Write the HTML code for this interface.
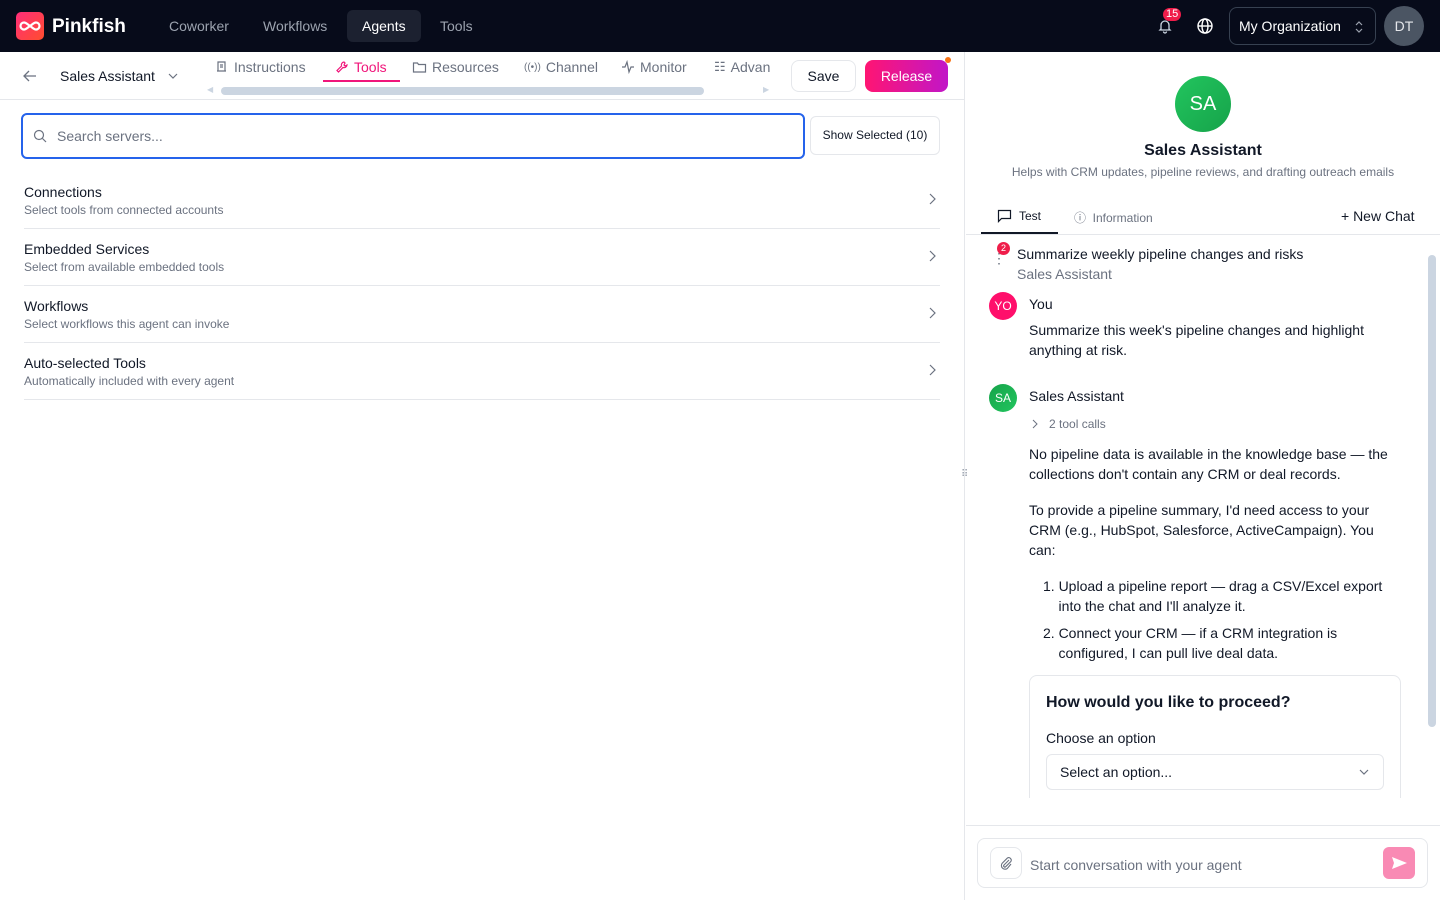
<!DOCTYPE html>
<html><head><meta charset="utf-8"><style>
*{box-sizing:border-box;margin:0;padding:0}
body{width:1440px;height:900px;overflow:hidden;font-family:"Liberation Sans",sans-serif;background:#fff;color:#111827;position:relative}
.top{position:absolute;left:0;top:0;width:1440px;height:52px;background:#070b1a}
.abs{position:absolute}
.nav{position:absolute;top:10px;height:32px;line-height:32px;font-size:14px;color:#9ca3af;padding:0 15px;border-radius:6px}
.row{position:absolute;left:24px;width:916px;height:57px;border-bottom:1px solid #e5e7eb}
.row .t{position:absolute;top:12px;font-size:14px;color:#111827}
.row .s{position:absolute;top:31px;font-size:12px;color:#6b7280}
.row .c{position:absolute;right:4px;top:21px}
.tab{position:absolute;top:59px;font-size:14px;color:#6b7280;display:flex;align-items:center;gap:5px}
.p{position:absolute;left:1029px;font-size:14px;line-height:20px;color:#111827}
</style></head><body>
<div class="top"></div>
<div class="abs" style="left:16px;top:12px;width:28px;height:28px;border-radius:5px;background:linear-gradient(135deg,#ff2d7a,#ff4d2d)"><svg width="28" height="28" viewBox="0 0 28 28"><path d="M8 10.5a3.5 3.5 0 1 0 0 7c2 0 3-1.5 6-3.5s4-3.5 6-3.5a3.5 3.5 0 1 1 0 7c-2 0-3-1.5-6-3.5s-4-3.5-6-3.5z" fill="none" stroke="#fff" stroke-width="2.2"/></svg></div>
<div class="abs" style="left:52px;top:16px;font-size:19px;font-weight:bold;color:#fff">Pinkfish</div>
<div class="nav" style="left:154px">Coworker</div>
<div class="nav" style="left:248px">Workflows</div>
<div class="nav" style="left:347px;background:#1c2130;color:#fff">Agents</div>
<div class="nav" style="left:425px">Tools</div>
<svg class="abs" style="left:1157px;top:18px" width="16" height="16" viewBox="0 0 16 16" fill="none" stroke="#cbd5e1" stroke-width="1.3"><path d="M4 11V7a4 4 0 0 1 8 0v4l1 1H3zM6.5 13.5a1.5 1.5 0 0 0 3 0"/></svg>
<div class="abs" style="left:1163px;top:8px;background:#ef1d4a;color:#fff;font-size:11px;line-height:13px;padding:0 3px;border-radius:7px">15</div>
<svg class="abs" style="left:1196px;top:17px" width="18" height="18" viewBox="0 0 18 18" fill="none" stroke="#fff" stroke-width="1.4"><circle cx="9" cy="9" r="7"/><ellipse cx="9" cy="9" rx="3" ry="7"/><path d="M2 9h14"/></svg>
<div class="abs" style="left:1229px;top:7px;width:147px;height:38px;border:1px solid #374151;border-radius:8px;color:#fff;font-size:14px;line-height:36px;padding-left:9px">My Organization <svg style="position:absolute;right:12px;top:13px" width="8" height="12" viewBox="0 0 8 12" fill="none" stroke="#9ca3af" stroke-width="1.2"><path d="M1 4l3-3 3 3M1 8l3 3 3-3"/></svg></div>
<div class="abs" style="left:1384px;top:6px;width:40px;height:40px;border-radius:50%;background:#4b5563;color:#e5e7eb;font-size:14px;text-align:center;line-height:40px">DT</div>

<div class="abs" style="left:0;top:52px;width:964px;height:48px;border-bottom:1px solid #e5e7eb"></div>
<svg class="abs" style="left:22px;top:68px" width="16" height="16" viewBox="0 0 16 16" fill="none" stroke="#6b7280" stroke-width="1.3"><path d="M14 8H2M7 3L2 8l5 5"/></svg>
<div class="abs" style="left:60px;top:68px;font-size:14px">Sales Assistant</div>
<svg class="abs" style="left:168px;top:72px" width="10" height="8" viewBox="0 0 10 8" fill="none" stroke="#6b7280" stroke-width="1.2"><path d="M1 2l4 4 4-4"/></svg>
<div class="tab" style="left:215px"><svg width="14" height="14" viewBox="0 0 14 14" fill="none" stroke="#6b7280" stroke-width="1.2"><path d="M3 2h7v9H3zM5 5h3M5 7h3M2 11h9"/></svg>Instructions</div>
<div class="tab" style="left:335px;color:#f0157a"><svg width="14" height="14" viewBox="0 0 14 14" fill="none" stroke="#f0157a" stroke-width="1.2"><path d="M9 2a3 3 0 0 0-2.5 4L2 10.5 3.5 12 8 7.5A3 3 0 0 0 12 5l-2 1-1-1 1-2z"/></svg>Tools</div>
<div class="abs" style="left:323px;top:80px;width:77px;height:2px;background:#f0157a"></div>
<div class="tab" style="left:412px"><svg width="15" height="14" viewBox="0 0 15 14" fill="none" stroke="#6b7280" stroke-width="1.2"><path d="M1.5 3h4l1 1.5h7V12h-12z"/></svg>Resources</div>
<div class="tab" style="left:524px"><span style="font-size:10px">((•))</span>Channel</div>
<div class="tab" style="left:621px"><svg width="14" height="14" viewBox="0 0 14 14" fill="none" stroke="#6b7280" stroke-width="1.2"><path d="M1 7h3l2-5 2 10 2-5h3"/></svg>Monitor</div>
<div class="tab" style="left:714px"><span style="font-size:13px">☷</span>Advan</div>
<div class="abs" style="left:221px;top:87px;width:483px;height:8px;border-radius:4px;background:#cbd5e1"></div>
<div class="abs" style="left:207px;top:85px;font-size:8px;color:#cbd5e1">◀</div>
<div class="abs" style="left:763px;top:85px;font-size:8px;color:#cbd5e1">▶</div>
<div class="abs" style="left:791px;top:60px;width:65px;height:32px;border:1px solid #e5e7eb;border-radius:8px;font-size:14px;text-align:center;line-height:30px">Save</div>
<div class="abs" style="left:865px;top:60px;width:83px;height:32px;border-radius:8px;background:linear-gradient(90deg,#ff1572,#c116c8);color:#fff;font-size:14px;text-align:center;line-height:32px">Release</div>
<div class="abs" style="left:945px;top:57px;width:6px;height:6px;border-radius:50%;background:#f97316"></div>

<div class="abs" style="left:21px;top:113px;width:784px;height:46px;border:2px solid #2563eb;border-radius:6px"></div>
<svg class="abs" style="left:33px;top:129px" width="14" height="14" viewBox="0 0 14 14" fill="none" stroke="#6b7280" stroke-width="1.2"><circle cx="6" cy="6" r="4.5"/><path d="M9.5 9.5L13 13"/></svg>
<div class="abs" style="left:57px;top:128px;font-size:14px;color:#6b7280">Search servers...</div>
<div class="abs" style="left:810px;top:116px;width:130px;height:39px;border:1px solid #e5e7eb;border-radius:6px;font-size:12px;text-align:center;line-height:37px">Show Selected (10)</div>

<div class="row" style="top:172px"><div class="t">Connections</div><div class="s">Select tools from connected accounts</div><svg class="c" width="8" height="12" viewBox="0 0 8 12" fill="none" stroke="#6b7280" stroke-width="1.2"><path d="M2 1l5 5-5 5"/></svg></div>
<div class="row" style="top:229px"><div class="t">Embedded Services</div><div class="s">Select from available embedded tools</div><svg class="c" width="8" height="12" viewBox="0 0 8 12" fill="none" stroke="#6b7280" stroke-width="1.2"><path d="M2 1l5 5-5 5"/></svg></div>
<div class="row" style="top:286px"><div class="t">Workflows</div><div class="s">Select workflows this agent can invoke</div><svg class="c" width="8" height="12" viewBox="0 0 8 12" fill="none" stroke="#6b7280" stroke-width="1.2"><path d="M2 1l5 5-5 5"/></svg></div>
<div class="row" style="top:343px"><div class="t">Auto-selected Tools</div><div class="s">Automatically included with every agent</div><svg class="c" width="8" height="12" viewBox="0 0 8 12" fill="none" stroke="#6b7280" stroke-width="1.2"><path d="M2 1l5 5-5 5"/></svg></div>

<div class="abs" style="left:964px;top:52px;width:1px;height:848px;background:#e5e7eb"></div>
<div class="abs" style="left:961px;top:469px;font-size:10px;color:#9ca3af">⠿</div>

<div class="abs" style="left:1175px;top:76px;width:56px;height:56px;border-radius:50%;background:linear-gradient(135deg,#22c55e,#16a34a);color:#fff;font-size:20px;text-align:center;line-height:56px">SA</div>
<div class="abs" style="left:966px;width:474px;top:142px;text-align:center;font-size:16px;font-weight:bold">Sales Assistant</div>
<div class="abs" style="left:966px;width:474px;top:165px;text-align:center;font-size:12px;color:#6b7280">Helps with CRM updates, pipeline reviews, and drafting outreach emails</div>
<div class="abs" style="left:966px;top:234px;width:474px;height:1px;background:#e5e7eb"></div>
<div class="abs" style="left:981px;top:232px;width:77px;height:2px;background:#111827"></div>
<svg class="abs" style="left:997px;top:209px" width="15" height="14" viewBox="0 0 15 14" fill="none" stroke="#111827" stroke-width="1.2"><path d="M1.5 1.5h12v8h-9l-3 3z"/></svg>
<div class="abs" style="left:1019px;top:209px;font-size:12px">Test</div>
<div class="abs" style="left:1074px;top:209px;font-size:12px;color:#6b7280">ⓘ&nbsp; Information</div>
<div class="abs" style="left:1341px;top:208px;font-size:14px">+ New Chat</div>
<div class="abs" style="left:1428px;top:255px;width:8px;height:472px;border-radius:4px;background:#cbd5e1"></div>
<div class="abs" style="left:992px;top:250px;color:#6b7280;font-size:14px">⋮</div>
<div class="abs" style="left:997px;top:242px;width:13px;height:13px;border-radius:50%;background:#ef1d4a;color:#fff;font-size:9px;text-align:center;line-height:13px">2</div>
<div class="p" style="left:1017px;top:244px">Summarize weekly pipeline changes and risks</div>
<div class="p" style="left:1017px;top:264px;color:#6b7280">Sales Assistant</div>
<div class="abs" style="left:989px;top:292px;width:28px;height:28px;border-radius:50%;background:#ff0f6b;color:#fff;font-size:12px;text-align:center;line-height:28px">YO</div>
<div class="p" style="top:294px">You</div>
<div class="p" style="top:320px;width:370px">Summarize this week's pipeline changes and highlight anything at risk.</div>
<div class="abs" style="left:989px;top:384px;width:28px;height:28px;border-radius:50%;background:linear-gradient(135deg,#16a34a,#22c55e);color:#fff;font-size:12px;text-align:center;line-height:28px">SA</div>
<div class="p" style="top:386px">Sales Assistant</div>
<svg class="abs" style="left:1032px;top:419px" width="6" height="10" viewBox="0 0 6 10" fill="none" stroke="#6b7280" stroke-width="1"><path d="M1 1l4 4-4 4"/></svg>
<div class="p" style="left:1049px;top:414px;font-size:12px;color:#6b7280">2 tool calls</div>
<div class="p" style="top:444px;width:372px">No pipeline data is available in the knowledge base — the collections don't contain any CRM or deal records.</div>
<div class="p" style="top:500px;width:372px">To provide a pipeline summary, I'd need access to your CRM (e.g., HubSpot, Salesforce, ActiveCampaign). You can:</div>
<div class="p" style="left:1043px;top:576px;width:350px">1. Upload a pipeline report — drag a CSV/Excel export<br>&nbsp;&nbsp;&nbsp;&nbsp;into the chat and I'll analyze it.</div>
<div class="p" style="left:1043px;top:623px;width:350px">2. Connect your CRM — if a CRM integration is<br>&nbsp;&nbsp;&nbsp;&nbsp;configured, I can pull live deal data.</div>
<div class="abs" style="left:1029px;top:675px;width:372px;height:123px;border:1px solid #e5e7eb;border-bottom:none;border-radius:8px 8px 0 0"></div>
<div class="abs" style="left:1046px;top:694px;font-size:16px;font-weight:bold">How would you like to proceed?</div>
<div class="abs" style="left:1046px;top:730px;font-size:14px">Choose an option</div>
<div class="abs" style="left:1046px;top:754px;width:338px;height:36px;border:1px solid #e5e7eb;border-radius:6px;font-size:14px;line-height:34px;padding-left:13px">Select an option...<svg style="position:absolute;right:14px;top:14px" width="10" height="7" viewBox="0 0 10 7" fill="none" stroke="#6b7280" stroke-width="1.2"><path d="M1 1l4 4 4-4"/></svg></div>
<div class="abs" style="left:966px;top:825px;width:474px;height:1px;background:#e5e7eb"></div>
<div class="abs" style="left:977px;top:838px;width:451px;height:50px;border:1px solid #e5e7eb;border-radius:8px"></div>
<div class="abs" style="left:990px;top:847px;width:32px;height:32px;border:1px solid #e5e7eb;border-radius:8px"><svg style="position:absolute;left:8px;top:8px" width="14" height="14" viewBox="0 0 14 14" fill="none" stroke="#6b7280" stroke-width="1.1"><path d="M10 4L5 9a1.2 1.2 0 0 0 1.7 1.7l5-5a2.5 2.5 0 0 0-3.5-3.5l-5 5a3.7 3.7 0 0 0 5.2 5.2L12 8"/></svg></div>
<div class="abs" style="left:1030px;top:857px;font-size:14px;color:#6b7280">Start conversation with your agent</div>
<div class="abs" style="left:1383px;top:847px;width:32px;height:32px;border-radius:6px;background:#f98ab4"><svg width="32" height="32" viewBox="0 0 32 32"><path d="M9 10l15 6-15 6 2-6z" fill="#fff"/></svg></div>
</body></html>
